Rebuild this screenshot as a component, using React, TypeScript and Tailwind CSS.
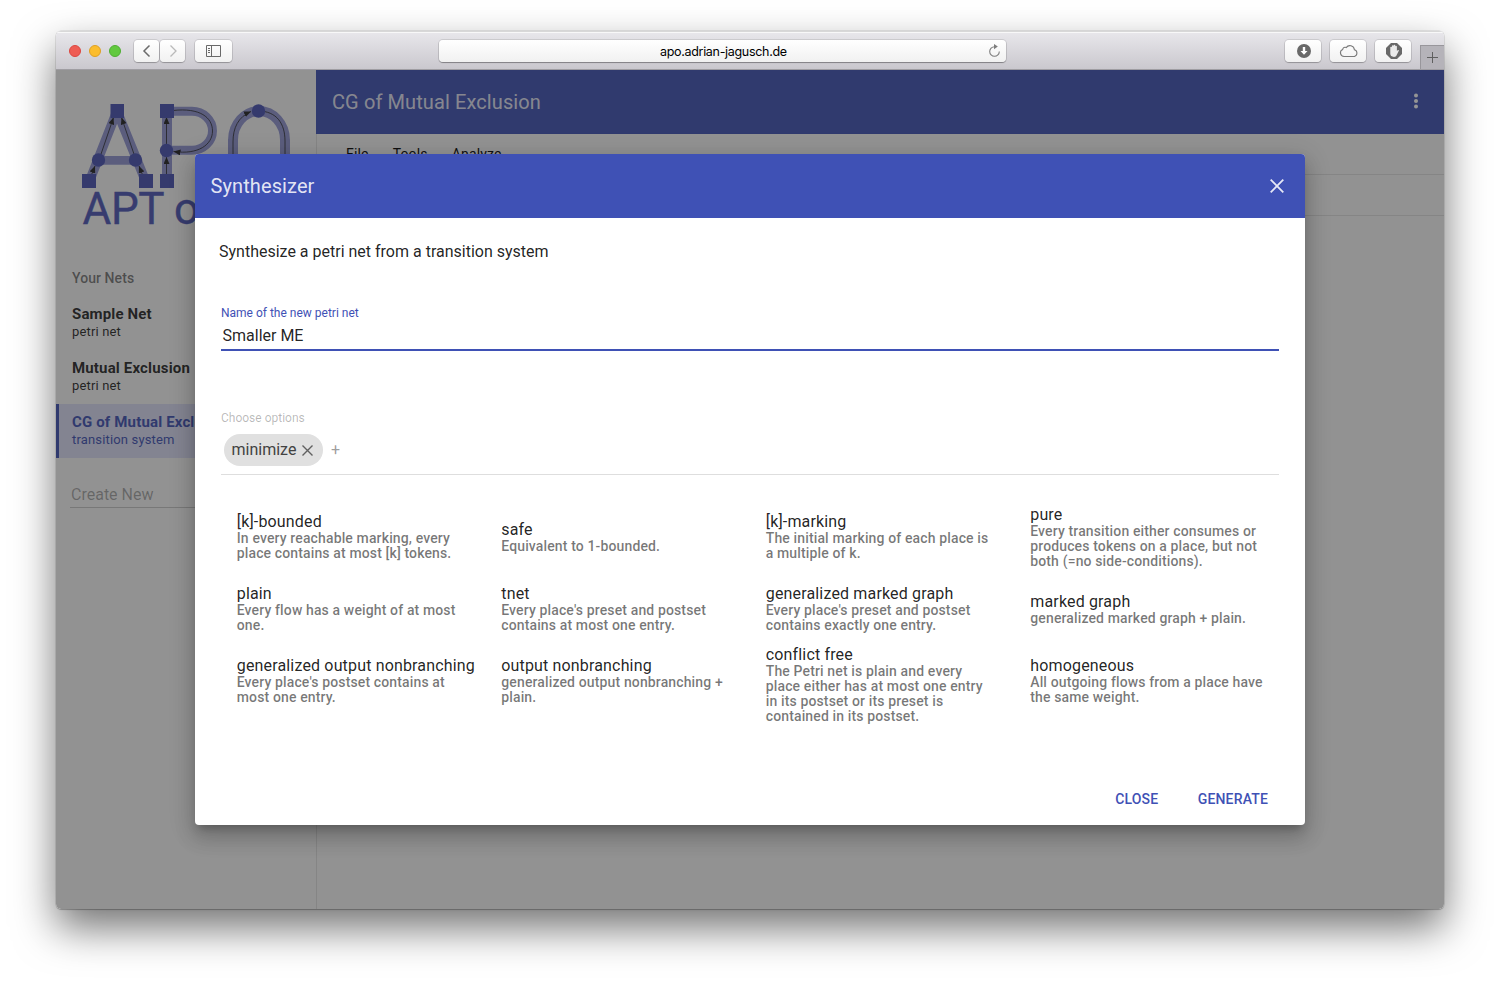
import React from "react";

const options = [
  ["[k]-bounded", "In every reachable marking, every place contains at most [k] tokens."],
  ["safe", "Equivalent to 1-bounded."],
  ["[k]-marking", "The initial marking of each place is\na multiple of k."],
  ["pure", "Every transition either consumes or produces tokens on a place, but not both (=no side-conditions)."],
  ["plain", "Every flow has a weight of at most one."],
  ["tnet", "Every place's preset and postset contains at most one entry."],
  ["generalized marked graph", "Every place's preset and postset contains exactly one entry."],
  ["marked graph", "generalized marked graph + plain."],
  ["generalized output nonbranching", "Every place's postset contains at most one entry."],
  ["output nonbranching", "generalized output nonbranching + plain."],
  ["conflict free", "The Petri net is plain and every\nplace either has at most one entry\nin its postset or its preset is\ncontained in its postset."],
  ["homogeneous", "All outgoing flows from a place have the same weight."],
];

function ChromeButton({ className, children }: { className: string; children: React.ReactNode }) {
  return (
    <div
      className={`flex h-[22px] items-center justify-center rounded-[4px] bg-gradient-to-b from-white to-[#f1f1f1] shadow-[0_0_0_1px_rgba(0,0,0,0.1),0_1px_1px_rgba(0,0,0,0.2)] ${className}`}
    >
      {children}
    </div>
  );
}

function TitleBar() {
  return (
    <div className="flex h-[39px] shrink-0 items-center border-b border-[#9f9da2] bg-gradient-to-b from-[#e9e8ec] to-[#cac8ce] pt-[2px] shadow-[inset_0_1px_0_#d8d8d8,inset_0_2px_0_#f8f8f8]">
      <div className="ml-[13px] flex gap-2">
        <div className="size-3 rounded-full border border-[#dc4640] bg-[#ee5c54]" />
        <div className="size-3 rounded-full border border-[#dfa023] bg-[#fbbd2e]" />
        <div className="size-3 rounded-full border border-[#4fae33] bg-[#62c93f]" />
      </div>
      <div className="ml-[13px] flex gap-px">
        <ChromeButton className="w-[25px]">
          <svg width="12" height="14" viewBox="0 0 12 14" fill="none" stroke="#6b6b6b" strokeWidth="1.5"><path d="M8.500 1.500 3 7l5.500 5.500" /></svg>
        </ChromeButton>
        <ChromeButton className="w-[25px]">
          <svg width="12" height="14" viewBox="0 0 12 14" fill="none" stroke="#b9b9b9" strokeWidth="1.3"><path d="M3.500 1.500 9 7l-5.500 5.500" /></svg>
        </ChromeButton>
      </div>
      <ChromeButton className="ml-[10px] w-[37px]">
        <svg width="16" height="12" viewBox="0 0 16 12" fill="none" stroke="#696969"><path d="M.5.5h14v11H.5zM5.500.5v11M2 3.500h2M2 5.500h2M2 7.500h2" /></svg>
      </ChromeButton>
      <div className="ml-[207px] flex h-[22px] w-[567px] items-center rounded-[4px] bg-gradient-to-b from-white to-[#f1f1f1] font-['Inter',sans-serif] text-[12.5px] text-black shadow-[0_0_0_1px_rgba(0,0,0,0.1),0_1px_1px_rgba(0,0,0,0.3)]">
        <span className="ml-[221px] w-[128px] whitespace-nowrap pt-[2px] tracking-[-0.025em]">apo.adrian-jagusch.de</span>
        <svg className="ml-[200px]" width="13" height="14" viewBox="0 0 13 14"><path d="M6.500 2.700A4.800 4.800 0 1 0 11.300 7.500" fill="none" stroke="#7d7d7d" strokeWidth="1.100" /><path d="M6 0v5.200L9.800 2.600z" fill="#7d7d7d" /></svg>
      </div>
      <div className="ml-[279px] flex gap-[9px]">
        <ChromeButton className="w-9">
          <svg className="ml-px" width="14" height="14" viewBox="0 0 14 14"><circle cx="7" cy="7" r="7" fill="#696969" /><path d="M5.800 3h2.400v4h2.300L7 10.700 3.500 7h2.300z" fill="#fff" /></svg>
        </ChromeButton>
        <ChromeButton className="w-9">
          <svg className="ml-[2px]" width="20" height="14" viewBox="0 0 20 14" fill="none" stroke="#7a7a7a" strokeWidth="1.100"><path d="M5 12.500a3.700 3.700 0 0 1-1.300-7.100 2.400 2.400 0 0 1 3.500-1.800 4.500 4.500 0 0 1 8.200 2.200A3.500 3.500 0 0 1 15.500 12.500z" /></svg>
        </ChromeButton>
        <ChromeButton className="w-9">
          <svg className="ml-[2px]" width="16" height="16" viewBox="0 0 16 16"><path d="M5 0h6l5 5v6l-5 5H5l-5-5V5z" fill="#696969" /><path d="M4.300 8V4.300c0-.8 1.600-.8 1.600 0V3c0-.9 1.700-.9 1.700 0v-.6c0-.9 1.700-.9 1.700 0v1c0-.8 1.600-.8 1.600 0V8l.8-.8c.8-.4 1.400.3 1 .9L10.600 12.300c-.5 1-1.200 1.600-2.600 1.600-2.400 0-3.700-1-3.700-3.300z" fill="#ebebeb" /></svg>
        </ChromeButton>
      </div>
      <div className="ml-[9px] flex h-6 w-6 shrink-0 items-center justify-center self-end border-l border-t border-[#98969b] bg-[#b5b3b9]">
        <svg width="11" height="11" viewBox="0 0 11 11" stroke="#5f5f5f" strokeWidth="1"><path d="M5.500 0v11M0 5.500h11" /></svg>
      </div>
    </div>
  );
}

function Logo() {
  return (
    <svg width="244" height="140" viewBox="72 94 244 140" className="block">
      <defs>
        <marker id="arrow" markerUnits="userSpaceOnUse" markerWidth="8" markerHeight="6" refX="7" refY="3" orient="auto">
          <path d="M0 0 7 3 0 6z" fill="#222" />
        </marker>
      </defs>
      <g fill="none" stroke="#9095d2">
        <path d="M89.500 181 117 111l28.500 70" strokeWidth="9.500" strokeLinejoin="bevel" />
        <path d="M98 160.300h38" strokeWidth="8.700" />
        <path d="M167 181v-70" strokeWidth="10" />
        <path d="M172 111.300h20a20.500 19.500 0 0 1 0 39h-20" strokeWidth="9" />
        <path d="M233 162v-22a26 29 0 0 1 52 0v22" strokeWidth="10" />
      </g>
      <g fill="none" stroke="#222" strokeWidth=".8">
        <path d="M99 160l14.500-42.500" markerEnd="url(#arrow)" />
        <path d="M136 160l-14.500-42.500" markerEnd="url(#arrow)" />
        <path d="M89 181l6-15" markerEnd="url(#arrow)" />
        <path d="M145 181l-6-15" markerEnd="url(#arrow)" />
        <path d="M166.500 181v-24" markerEnd="url(#arrow)" />
        <path d="M166.500 150v-33" markerEnd="url(#arrow)" />
        <path d="M173 110.500c27-3 39.500 7 39.500 20.500s-14 24-39 20.500" markerEnd="url(#arrow)" />
        <path d="M233 160v-18c0-14 5-25 18-30.500" markerEnd="url(#arrow)" />
        <path d="M258 111c19 0 27 13 27 30v19" />
      </g>
      <g fill="#4751b3">
        <path d="M110.500 104h13.500v14h-13.500zM82 174h14v14H82zM139 174h14v14h-14zM160 104h14v14h-14zM160 174h14v14h-14z" />
        <circle cx="98.500" cy="160" r="6.700" /><circle cx="135.500" cy="160" r="6.700" /><circle cx="166.500" cy="150.500" r="6.700" /><circle cx="258.500" cy="111" r="6.700" />
      </g>
      <text x="82.500" y="223.500" fontFamily="Roboto, sans-serif" fontSize="44" letterSpacing="-.3" fill="#4b55b6" stroke="#4b55b6" strokeWidth=".4">APT o</text>
    </svg>
  );
}

function Net({ name, kind, active = false }: { name: string; kind: string; active?: boolean }) {
  return (
    <div
      className={
        active
          ? "flex h-[54px] flex-col justify-center border-l-[3px] border-[#3f51b5] bg-[#dcdff8] pb-[2px] pl-[13px] text-[#3f51b5]"
          : "flex h-[54px] flex-col justify-center pb-[2px] pl-4"
      }
    >
      <b className="text-[15px] leading-[18px]">{name}</b>
      <span className="text-[13px] leading-[17px]">{kind}</span>
    </div>
  );
}

function Sidebar() {
  return (
    <aside className="w-[261px] shrink-0 border-r border-[#e0e0e0]">
      <div className="pl-4 pt-6"><Logo /></div>
      <div className="mt-[34px] h-[22px] pl-4 text-[14px] font-medium leading-[20px] tracking-[0.005em] text-black/54">Your Nets</div>
      <div className="mt-[6px]">
        <Net name="Sample Net" kind="petri net" />
        <Net name="Mutual Exclusion" kind="petri net" />
        <Net name="CG of Mutual Exclusion" kind="transition system" active />
      </div>
      <div className="ml-[14px] mr-4 mt-[22px] h-[28px] border-b border-black/20 pl-px pt-[3px] text-[16px] leading-[24px] tracking-normal text-black/35">Create New</div>
    </aside>
  );
}

function Dialog() {
  return (
    <div className="absolute left-[139px] top-[84px] flex h-[671px] w-[1110px] flex-col rounded-[4px] bg-white shadow-[0_7px_8px_-4px_rgba(0,0,0,0.2),0_13px_19px_2px_rgba(0,0,0,0.14),0_5px_24px_4px_rgba(0,0,0,0.12)]">
      <header className="flex h-16 shrink-0 items-center justify-between rounded-t-[4px] bg-[#3f51b5] pl-[15.5px] pr-[21px] text-[20px] tracking-[0.005em] text-white/87">
        Synthesizer
        <svg width="14" height="14" viewBox="0 0 14 14" stroke="#e6e8f6" strokeWidth="1.800"><path d="m.7.7 12.600 12.600M13.300.7.7 13.300" /></svg>
      </header>
      <div className="px-[26px]">
        <p className="-ml-[2px] mt-[22px] text-[16px] leading-6 tracking-normal">Synthesize a petri net from a transition system</p>
        <div className="mt-[41px] text-[12px] leading-4 tracking-normal text-[#3f51b5]">Name of the new petri net</div>
        <div className="mt-px h-[29px] border-b-2 border-[#3f51b5] pl-[1.5px] pt-[2px] text-[16px] leading-6 tracking-normal">Smaller ME</div>
        <div className="mt-[59px] text-[12px] leading-4 tracking-normal text-black/28">Choose options</div>
        <div className="flex h-[49px] border-b border-[#dedede] pl-[3px] pt-2">
          <div className="flex h-8 w-[99px] items-center rounded-full bg-[#e0e0e0] pl-[7.5px] text-[16px] tracking-normal text-[#424242]">
            minimize
            <svg className="ml-[5.5px]" width="11" height="11" viewBox="0 0 11 11" stroke="#606060" strokeWidth="1.400"><path d="m.5.5 10 10m0-10-10 10" /></svg>
          </div>
          <span className="ml-2 text-[16px] leading-8 text-black/40">+</span>
        </div>
        <div className="mt-[26px] grid grid-cols-4 items-start">
          {options.map(([title, text]) => (
            <div key={title} className="flex min-h-[72px] flex-col justify-center py-px pl-[15.75px] pr-[14.5px]">
              <h3 className="whitespace-nowrap text-[16px] leading-[18px]">{title}</h3>
              <p className="whitespace-pre-line text-[14px] font-medium leading-[15px] tracking-[0.0095em] text-black/54">{text}</p>
            </div>
          ))}
        </div>
      </div>
      <footer className="mt-auto flex h-[52px] shrink-0 justify-end gap-[39.5px] pr-[37px] pt-4 text-[14px] font-medium leading-5 text-[#3f51b5]">
        <span>CLOSE</span><span>GENERATE</span>
      </footer>
    </div>
  );
}

export default function App() {
  return (
    <div className="h-[989px] w-[1500px] overflow-hidden bg-white pl-14 pt-[31px] font-['Roboto',sans-serif] tracking-[0.01em] text-black/87">
      <div className="w-[1388px] rounded-[5px] shadow-[0_0_0_0.5px_rgba(0,0,0,0.15),0_1px_1px_0_rgba(0,0,0,0.2),0_19px_42px_rgba(0,0,0,0.55)]">
        <div className="flex h-[878px] flex-col overflow-hidden rounded-[5px]">
          <TitleBar />
          <div className="relative flex min-h-0 flex-1 bg-[#fafafa]">
            <Sidebar />
            <main className="-ml-px flex-1">
              <div className="flex h-16 items-center justify-between bg-[#3f51b5] pl-4 pr-[26px] text-[20px] tracking-[0.005em] text-white/87">
                CG of Mutual Exclusion
                <svg className="mb-[2px]" width="4" height="16" viewBox="0 0 4 16" fill="#fff"><circle cx="2" cy="2.500" r="2" /><circle cx="2" cy="8" r="2" /><circle cx="2" cy="13.500" r="2" /></svg>
              </div>
              <div className="flex h-[41px] gap-6 border-b border-[#e0e0e0] pl-[30px] pt-[10px] text-[14px] leading-5 text-black">
                <span>File</span><span>Tools</span><span>Analyze</span>
              </div>
              <div className="h-[41px] border-b border-[#e0e0e0]" />
            </main>
            <div className="absolute inset-0 bg-[#212121]/48" />
            <Dialog />
          </div>
        </div>
      </div>
    </div>
  );
}
